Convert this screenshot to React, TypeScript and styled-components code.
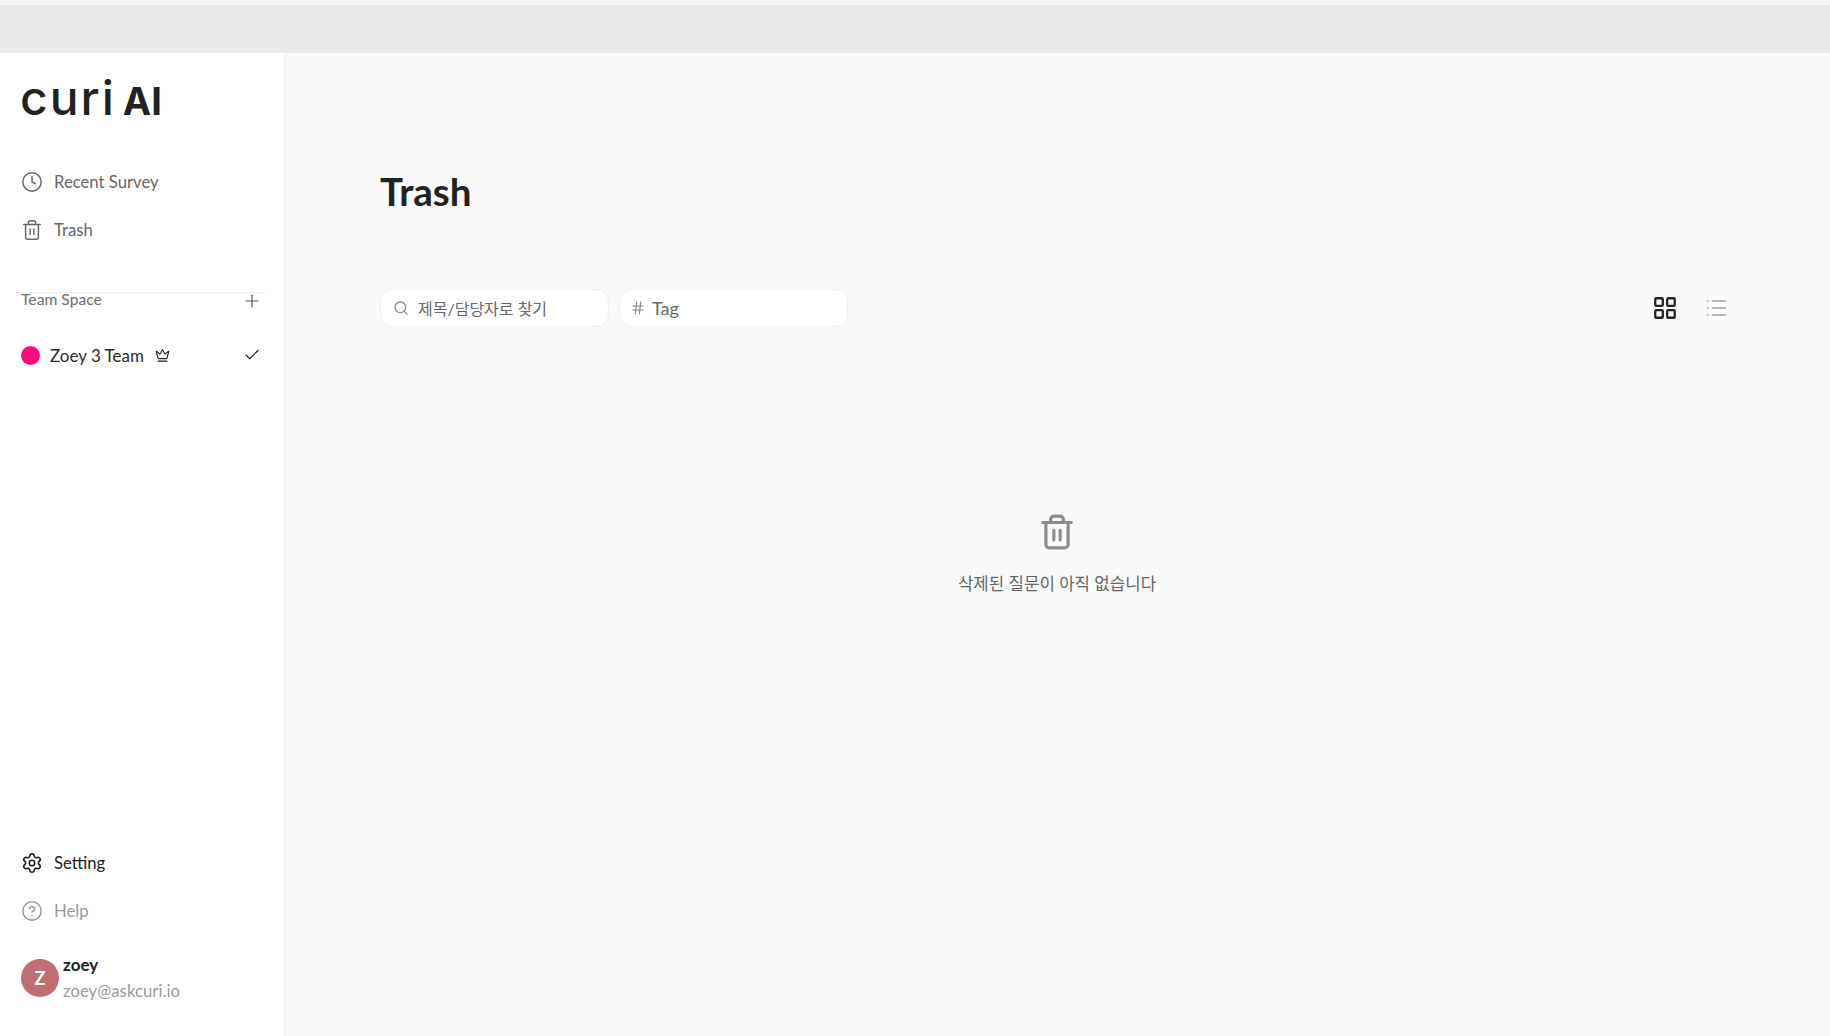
import React from "react";
import styled, { createGlobalStyle } from "styled-components";
import { Check, CircleHelp, Clock, Crown, Hash, LayoutGrid, Plus, Search, Settings, Trash2 } from "lucide-react";

const FONT = `Lato, "Noto Sans CJK KR", sans-serif`;

const GlobalStyle = createGlobalStyle`
  html, body {
    margin: 0;
    padding: 0;
    height: 100%;
    background: #fafafa;
  }
  #root {
    height: 100%;
  }
  * {
    box-sizing: border-box;
  }
`;

const Page = styled.div`
  display: flex;
  flex-direction: column;
  width: 1830px;
  height: 1036px;
  overflow: hidden;
  font-family: ${FONT};
  color: #222;
`;

const TopBar = styled.div`
  flex: 0 0 53px;
  background: #e9e9e9;
  border-top: 5px solid #f4f4f4;
`;

const Body = styled.div`
  flex: 1;
  display: flex;
  min-height: 0;
`;

const Sidebar = styled.aside`
  flex: 0 0 285px;
  display: flex;
  flex-direction: column;
  background: #fff;
  border-right: 1px solid #f3f3f3;
  padding: 20px 0 35px;
`;

const Logo = styled.div`
  display: flex;
  align-items: baseline;
  height: 50px;
  padding-left: 20px;
  font-family: "Inter", sans-serif;
  line-height: 50px;
  color: #222;
  white-space: nowrap;
`;

const LogoWord = styled.span`
  font-size: 48px;
  font-weight: 500;
  letter-spacing: 2px;
`;

const LogoCaps = styled.span`
  margin-left: 7px;
  font-size: 38px;
  font-weight: 700;
`;

const NavList = styled.nav`
  display: flex;
  flex-direction: column;
  gap: 8px;
  margin-top: 39px;
  padding-left: 21px;
`;

const NavItem = styled.div<{ $tone: string }>`
  display: flex;
  align-items: center;
  gap: 11px;
  height: 40px;
  font-size: 16.7px;
  color: ${(p) => p.$tone};
`;

const TeamHeader = styled.div`
  display: flex;
  justify-content: space-between;
  align-items: flex-start;
  margin: 42px 19px 0 16px;
  padding: 0 0 0 5px;
  border-top: 1px solid #f0f0f0;
  height: 46px;
  font-size: 15.7px;
  color: #6f6f6f;

  span {
    margin-top: -3px;
  }
  svg {
    margin: -2px 3px 0 0;
  }
`;

const TeamRow = styled.div`
  display: flex;
  align-items: center;
  height: 34px;
  padding: 0 23px 0 21px;
  font-size: 17px;
  color: #2a2a2a;
`;

const TeamDot = styled.span`
  width: 19px;
  height: 19px;
  border-radius: 50%;
  background: #ff0a7d;
  margin-right: 10px;
`;

const TeamName = styled.span`
  margin-right: 11px;
`;

const TeamCheck = styled.span`
  margin-left: auto;
  display: flex;
`;

const Spacer = styled.div`
  flex: 1;
`;

const UserRow = styled.div`
  display: flex;
  align-items: center;
  gap: 4px;
  margin-top: 23px;
  padding-left: 21px;
`;

const Avatar = styled.div`
  width: 38px;
  height: 38px;
  border-radius: 50%;
  background: #bd6f74;
  color: #fff;
  display: flex;
  align-items: center;
  justify-content: center;
  font-size: 18px;
  font-weight: 700;
`;

const UserInfo = styled.div`
  display: flex;
  flex-direction: column;
  gap: 5px;
  line-height: 21px;
`;

const UserName = styled.div`
  font-size: 17px;
  font-weight: 700;
  color: #222;
`;

const UserMail = styled.div`
  font-size: 16.8px;
  color: #9a9a9a;
`;

const Main = styled.main`
  flex: 1;
  background: #fafafa;
  padding: 114px 96px 0 95px;
  display: flex;
  flex-direction: column;
`;

const Title = styled.h1`
  margin: 0;
  height: 48px;
  line-height: 48px;
  font-size: 38.5px;
  font-weight: 700;
  color: #222;
`;

const Toolbar = styled.div`
  display: flex;
  align-items: center;
  margin-top: 74px;
  gap: 10px;
`;

const Field = styled.div<{ $pad: number; $gap: number }>`
  display: flex;
  align-items: center;
  width: 229px;
  height: 38px;
  background: #fff;
  border: 1px solid #f0f0f0;
  border-radius: 12px;
  padding-left: ${(p) => p.$pad}px;
  gap: ${(p) => p.$gap}px;
  font-size: 16px;
  color: #666;
`;

const TagText = styled.span`
  font-size: 18px;
`;

const ViewSwitch = styled.div`
  margin-left: auto;
  margin-right: 5px;
  display: flex;
  align-items: center;
  gap: 27px;
`;

const Empty = styled.div`
  display: flex;
  flex-direction: column;
  align-items: center;
  margin-top: 186px;
  gap: 20px;
  font-size: 16.8px;
  color: #666;
`;

const ListIcon = () => (
  <svg width="24" height="24" viewBox="0 0 24 24" fill="none" stroke="#a3a3a3" strokeWidth="1.6" strokeLinecap="round">
    <path d="M7.5 5h13M7.5 12h13M7.5 19h13" />
    <path d="M2.5 5h.5M2.5 12h.5M2.5 19h.5" />
  </svg>
);

const App = () => {
  return (
    <Page>
      <GlobalStyle />
      <TopBar />
      <Body>
        <Sidebar>
          <Logo>
            <LogoWord>curi</LogoWord>
            <LogoCaps>AI</LogoCaps>
          </Logo>
          <NavList>
            <NavItem $tone="#666">
              <Clock size={22} strokeWidth={1.6} />
              Recent Survey
            </NavItem>
            <NavItem $tone="#666">
              <Trash2 size={22} strokeWidth={1.6} />
              Trash
            </NavItem>
          </NavList>
          <TeamHeader>
            <span>Team Space</span>
            <Plus size={20} strokeWidth={1.4} color="#555" />
          </TeamHeader>
          <TeamRow>
            <TeamDot />
            <TeamName>Zoey 3 Team</TeamName>
            <Crown size={15} strokeWidth={1.8} color="#222" />
            <TeamCheck>
              <Check size={18} strokeWidth={1.6} color="#222" />
            </TeamCheck>
          </TeamRow>
          <Spacer />
          <NavList>
            <NavItem $tone="#222">
              <Settings size={22} strokeWidth={1.8} />
              Setting
            </NavItem>
            <NavItem $tone="#999">
              <CircleHelp size={22} strokeWidth={1.6} />
              Help
            </NavItem>
          </NavList>
          <UserRow>
            <Avatar>Z</Avatar>
            <UserInfo>
              <UserName>zoey</UserName>
              <UserMail>zoey@askcuri.io</UserMail>
            </UserInfo>
          </UserRow>
        </Sidebar>
        <Main>
          <Title>Trash</Title>
          <Toolbar>
            <Field $pad={12} $gap={9}>
              <Search size={16} strokeWidth={2} color="#888" />
              제목/담당자로 찾기
            </Field>
            <Field $pad={10} $gap={6}>
              <Hash size={16} strokeWidth={1.8} color="#888" />
              <TagText>Tag</TagText>
            </Field>
            <ViewSwitch>
              <LayoutGrid size={26} strokeWidth={2.1} color="#222" />
              <ListIcon />
            </ViewSwitch>
          </Toolbar>
          <Empty>
            <Trash2 size={38} strokeWidth={2} color="#8c8c8c" />
            삭제된 질문이 아직 없습니다
          </Empty>
        </Main>
      </Body>
    </Page>
  );
};

export default App;
